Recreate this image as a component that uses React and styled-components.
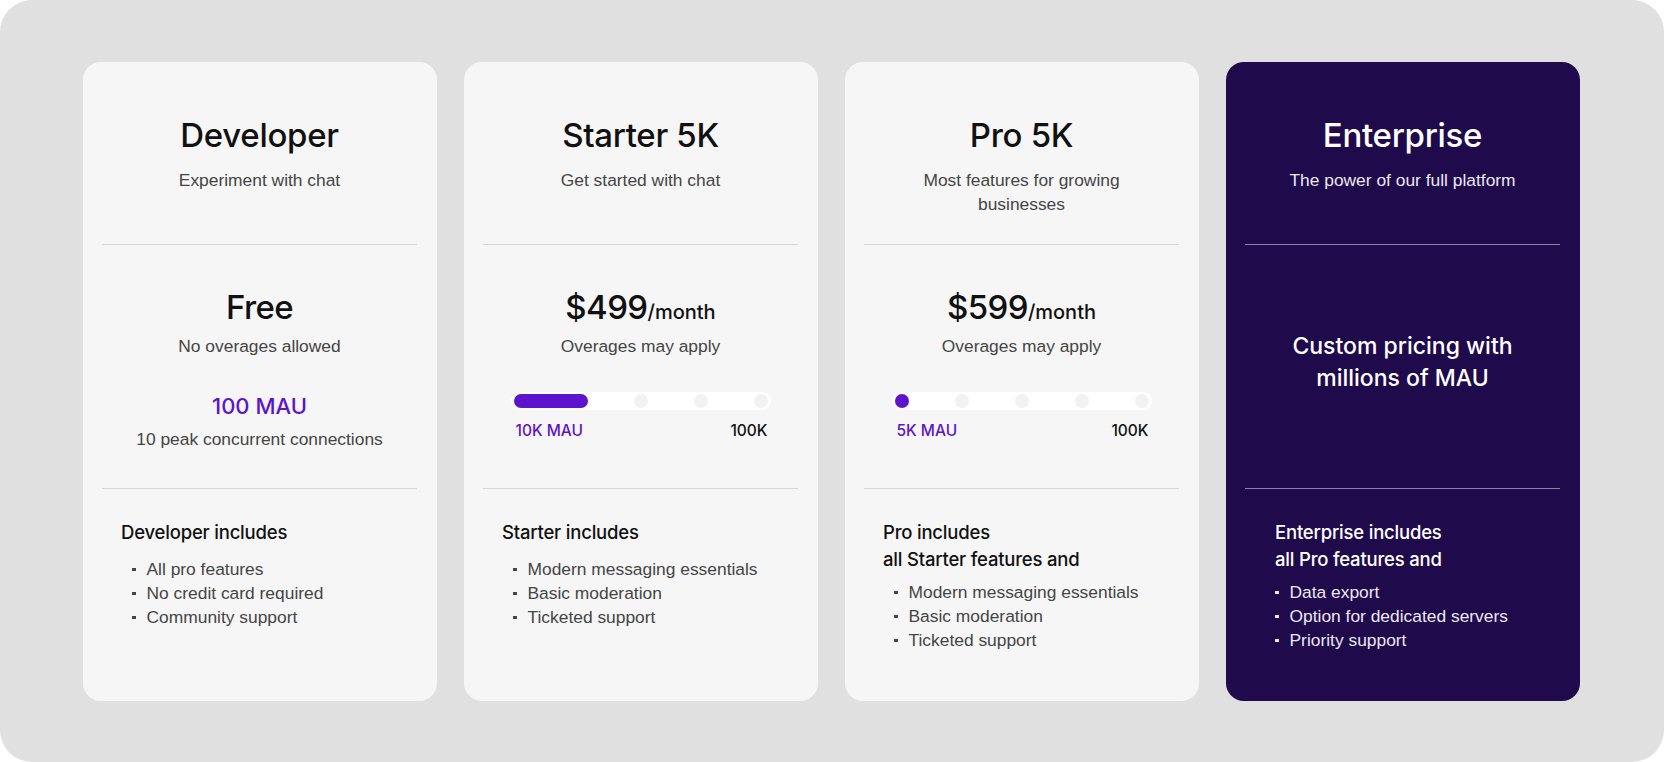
import styled, { createGlobalStyle } from "styled-components";

const plans = [
  {
    name: "Developer",
    tagline: ["Experiment with chat"],
    price: "Free",
    note: "No overages allowed",
    mau: "100 MAU",
    connections: "10 peak concurrent connections",
    includes: "Developer includes",
    features: ["All pro features", "No credit card required", "Community support"],
  },
  {
    name: "Starter 5K",
    tagline: ["Get started with chat"],
    price: "$499",
    per: "/month",
    note: "Overages may apply",
    slider: { value: 1, label: "10K MAU", max: "100K" },
    includes: "Starter includes",
    features: ["Modern messaging essentials", "Basic moderation", "Ticketed support"],
  },
  {
    name: "Pro 5K",
    tagline: ["Most features for growing", "businesses"],
    price: "$599",
    per: "/month",
    note: "Overages may apply",
    slider: { value: 0, label: "5K MAU", max: "100K" },
    includes: "Pro includes",
    extra: "all Starter features and",
    features: ["Modern messaging essentials", "Basic moderation", "Ticketed support"],
  },
  {
    name: "Enterprise",
    dark: true,
    tagline: ["The power of our full platform"],
    custom: ["Custom pricing with", "millions of MAU"],
    includes: "Enterprise includes",
    extra: "all Pro features and",
    features: ["Data export", "Option for dedicated servers", "Priority support"],
  },
];

const STEPS = 5;

function Slider({ value, label, max }) {
  return (
    <SliderWrap>
      <Track>
        <Fill style={{ width: 14 + value * 60 }} />
        {Array.from({ length: STEPS - 1 - value }).map((_, i) => (
          <Dot key={i} />
        ))}
      </Track>
      <SliderLabels>
        <MauLabel>{label}</MauLabel>
        <MaxLabel>{max}</MaxLabel>
      </SliderLabels>
    </SliderWrap>
  );
}

function PlanCard({ plan }) {
  const dark = !!plan.dark;
  return (
    <Card $dark={dark}>
      <Header>
        <Title>{plan.name}</Title>
        <Tagline $dark={dark}>
          {plan.tagline.map((line) => (
            <div key={line}>{line}</div>
          ))}
        </Tagline>
      </Header>
      <Divider $dark={dark} />
      <Pricing $custom={!!plan.custom}>
        {plan.custom ? (
          <Custom>
            {plan.custom.map((line) => (
              <div key={line}>{line}</div>
            ))}
          </Custom>
        ) : (
          <>
            <Price>
              {plan.price}
              {plan.per && <Per>{plan.per}</Per>}
            </Price>
            <Note>{plan.note}</Note>
            {plan.slider ? (
              <Slider {...plan.slider} />
            ) : (
              <>
                <Mau>{plan.mau}</Mau>
                <Connections>{plan.connections}</Connections>
              </>
            )}
          </>
        )}
      </Pricing>
      <Divider $dark={dark} />
      <Features>
        <IncludesHeading $indent={dark}>
          <div>{plan.includes}</div>
          {plan.extra && <div>{plan.extra}</div>}
        </IncludesHeading>
        <List $tight={!!plan.extra} $dark={dark}>
          {plan.features.map((f) => (
            <Item key={f}>{f}</Item>
          ))}
        </List>
      </Features>
    </Card>
  );
}

export default function App() {
  return (
    <>
      <GlobalStyle />
      <Page>
        {plans.map((p) => (
          <PlanCard key={p.name} plan={p} />
        ))}
      </Page>
    </>
  );
}

const GlobalStyle = createGlobalStyle`
  * { box-sizing: border-box; }
  html, body { margin: 0; padding: 0; background: #ffffff; }
  body {
    font-family: "Liberation Sans", Arial, sans-serif;
    -webkit-font-smoothing: antialiased;
  }
`;

const Page = styled.main`
  width: 1664px;
  height: 762px;
  display: flex;
  gap: 27px;
  padding: 62px 84px 61px 83px;
  background: #e0e0e0;
  border-radius: 32px;
`;

const Card = styled.section`
  flex: 1;
  display: flex;
  flex-direction: column;
  padding: 0 20px 0 19px;
  border-radius: 18px;
  background: ${(p) => (p.$dark ? "#1f0a4b" : "#f6f6f6")};
  color: ${(p) => (p.$dark ? "#ffffff" : "#111111")};
`;

const Header = styled.header`
  height: 182px;
  padding-top: 53px;
  text-align: center;
`;

const Title = styled.h2`
  margin: 0;
  font-family: Inter, sans-serif;
  font-weight: 500;
  font-size: 33px;
  line-height: 40px;
  letter-spacing: -0.3px;
`;

const Tagline = styled.div`
  margin-top: 13px;
  font-size: 17.4px;
  line-height: 24px;
  color: ${(p) => (p.$dark ? "#ebe7f2" : "#454545")};
`;

const Divider = styled.hr`
  margin: 0;
  border: 0;
  height: 1px;
  background: ${(p) => (p.$dark ? "#8d83a4" : "#d6d6d6")};
`;

const Pricing = styled.div`
  height: 243px;
  padding-top: ${(p) => (p.$custom ? "85px" : "42px")};
  display: flex;
  flex-direction: column;
  align-items: center;
  text-align: center;
`;

const Price = styled.div`
  height: 40px;
  font-family: Inter, sans-serif;
  font-weight: 500;
  font-size: 33px;
  line-height: 40px;
  letter-spacing: -0.6px;
`;

const Per = styled.span`
  font-size: 20px;
  line-height: 1;
  letter-spacing: 0;
`;

const Note = styled.div`
  margin-top: 7px;
  font-size: 17.4px;
  line-height: 24px;
  color: #454545;
`;

const Mau = styled.div`
  margin-top: 34px;
  font-family: Inter, sans-serif;
  font-weight: 500;
  font-size: 22px;
  line-height: 28px;
  color: #5c14cc;
`;

const Connections = styled.div`
  margin-top: 7px;
  font-size: 17.4px;
  line-height: 24px;
  color: #454545;
`;

const SliderWrap = styled.div`
  margin-top: 34px;
  width: 260px;
`;

const Track = styled.div`
  height: 18px;
  padding: 2px 3px;
  display: flex;
  align-items: center;
  gap: 46px;
  border-radius: 9px;
  background: #ffffff;
`;

const Fill = styled.div`
  height: 14px;
  border-radius: 7px;
  background: #5c14cc;
`;

const Dot = styled.div`
  width: 14px;
  height: 14px;
  border-radius: 50%;
  background: #f2f2f2;
`;

const SliderLabels = styled.div`
  margin-top: 11px;
  padding: 0 3px 0 5px;
  display: flex;
  justify-content: space-between;
  font-family: Inter, sans-serif;
  font-weight: 500;
  font-size: 15.5px;
  line-height: 20px;
`;

const MauLabel = styled.span`
  color: #5c14cc;
`;

const MaxLabel = styled.span`
  color: #111111;
`;

const Custom = styled.div`
  font-family: Inter, sans-serif;
  font-weight: 500;
  font-size: 23px;
  line-height: 32px;
`;

const Features = styled.div`
  padding: 30px 0 0 19px;
`;

const IncludesHeading = styled.div`
  padding-left: ${(p) => (p.$indent ? "11px" : "0")};
  font-family: Inter, sans-serif;
  font-weight: 500;
  font-size: 18.5px;
  line-height: 27px;
  letter-spacing: -0.2px;
`;

const List = styled.ul`
  margin: ${(p) => (p.$tight ? "7px" : "11px")} 0 0;
  padding: 0 0 0 11px;
  list-style: none;
  font-size: 17.4px;
  line-height: 24px;
  color: ${(p) => (p.$dark ? "#ebe7f2" : "#454545")};
`;

const Item = styled.li`
  display: flex;
  align-items: center;
  gap: 11px;

  &::before {
    content: "";
    flex: none;
    width: 3.5px;
    height: 3.5px;
    margin-top: 1px;
    background: currentColor;
  }
`;
